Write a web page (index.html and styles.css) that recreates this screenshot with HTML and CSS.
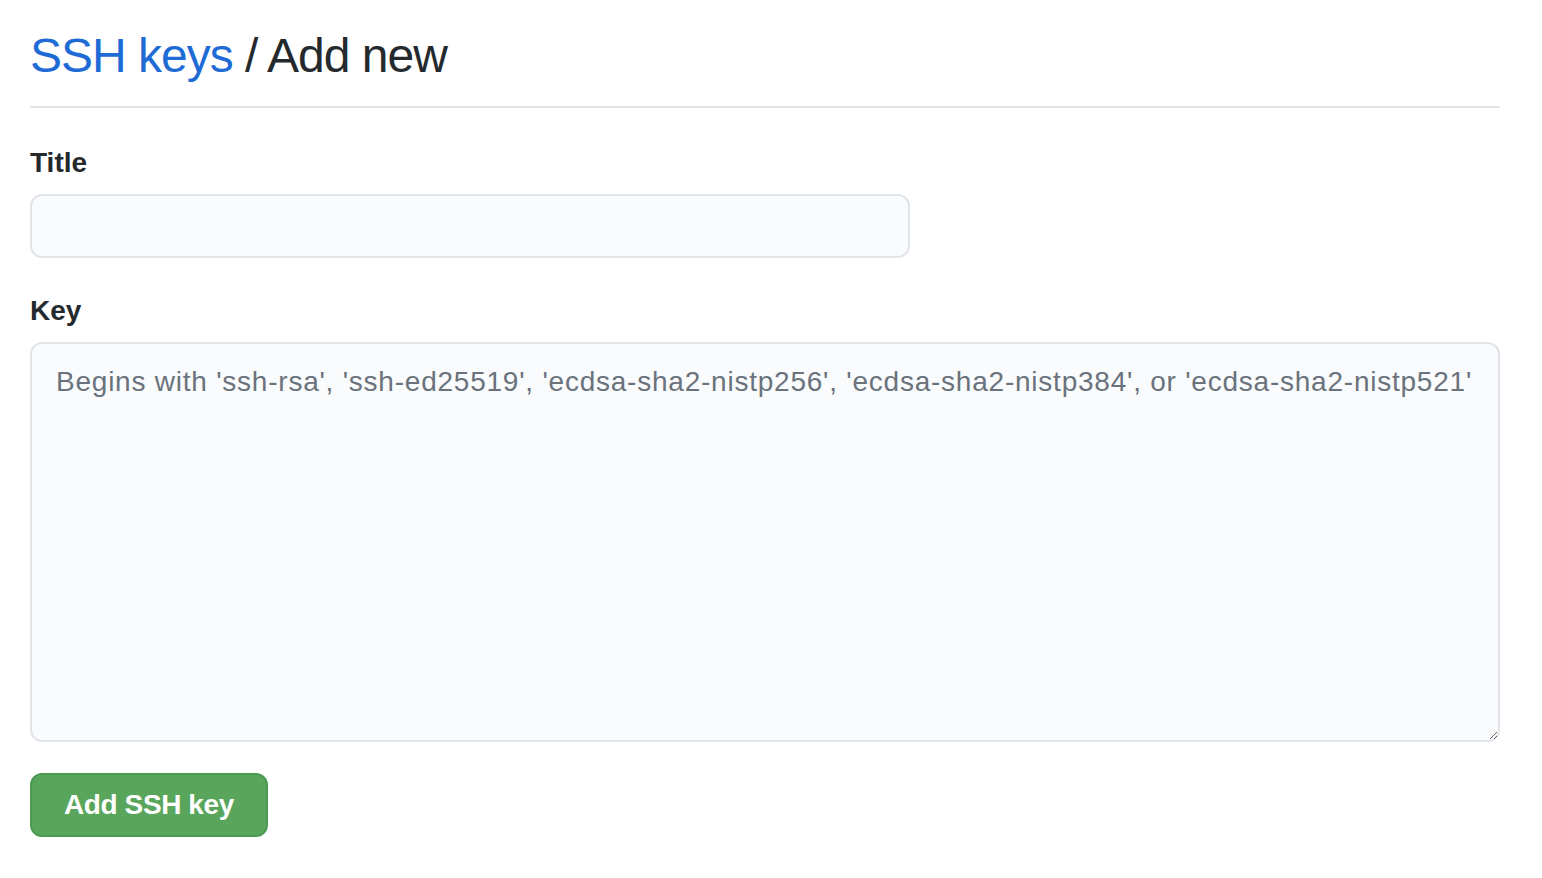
FILE: index.html
```html
<!DOCTYPE html>
<html lang="en">
<head>
<meta charset="utf-8">
<title>SSH keys / Add new</title>
<link rel="stylesheet" href="styles.css">
</head>
<body>
<main class="page">
  <div class="subhead">
    <h2 class="subhead-heading"><a class="crumb" href="#">SSH keys</a> / Add new</h2>
  </div>
  <form class="form">
    <div class="form-group">
      <label class="label" for="title">Title</label>
      <input class="form-control title-input" id="title" type="text">
    </div>
    <div class="form-group">
      <label class="label" for="key">Key</label>
      <textarea class="form-control key-input" id="key" placeholder="Begins with 'ssh-rsa', 'ssh-ed25519', 'ecdsa-sha2-nistp256', 'ecdsa-sha2-nistp384', or 'ecdsa-sha2-nistp521'"></textarea>
    </div>
    <button class="btn-primary" type="button">Add SSH key</button>
  </form>
</main>
</body>
</html>
```

FILE: styles.css
```css
html, body {
  margin: 0;
  padding: 0;
  background: #ffffff;
}

body {
  font-family: "Liberation Sans", Arial, sans-serif;
  color: #24292e;
}

.page {
  width: 1470px;
  padding: 20px 30px 0 30px;
}

.subhead {
  padding-bottom: 14px;
  border-bottom: 2px solid #e1e4e8;
}

.subhead-heading {
  margin: 0;
  font-size: 48px;
  line-height: 72px;
  font-weight: 400;
  letter-spacing: -1px;
  color: #24292e;
}

.crumb {
  color: #1f6bd6;
  text-decoration: none;
}

.form {
  display: flex;
  flex-direction: column;
  align-items: flex-start;
  padding-top: 35px;
}

.form-group {
  display: flex;
  flex-direction: column;
  align-items: flex-start;
  width: 100%;
  margin-bottom: 33px;
}

.form-group:nth-child(2) {
  margin-bottom: 31px;
}

.label {
  font-size: 28px;
  line-height: 40px;
  font-weight: 700;
  color: #24292e;
  margin-bottom: 11px;
}

.form-control {
  box-sizing: border-box;
  background: #fafbfc;
  border: 2px solid #e1e4e8;
  border-radius: 12px;
  font-family: "Liberation Sans", Arial, sans-serif;
  font-size: 28px;
  line-height: 40px;
  color: #24292e;
  outline: none;
}

.title-input {
  width: 880px;
  height: 64px;
  padding: 10px 24px;
}

.key-input {
  width: 1470px;
  height: 400px;
  padding: 18px 24px;
  letter-spacing: 0.77px;
  resize: vertical;
}

.key-input::placeholder {
  color: #6a737d;
}

.btn-primary {
  box-sizing: border-box;
  height: 64px;
  padding: 10px 32px;
  background: #5aa55c;
  border: 2px solid #4c9a51;
  border-radius: 12px;
  color: #ffffff;
  font-family: "Liberation Sans", Arial, sans-serif;
  font-size: 28px;
  line-height: 40px;
  font-weight: 700;
  letter-spacing: -0.4px;
  cursor: pointer;
}
```
